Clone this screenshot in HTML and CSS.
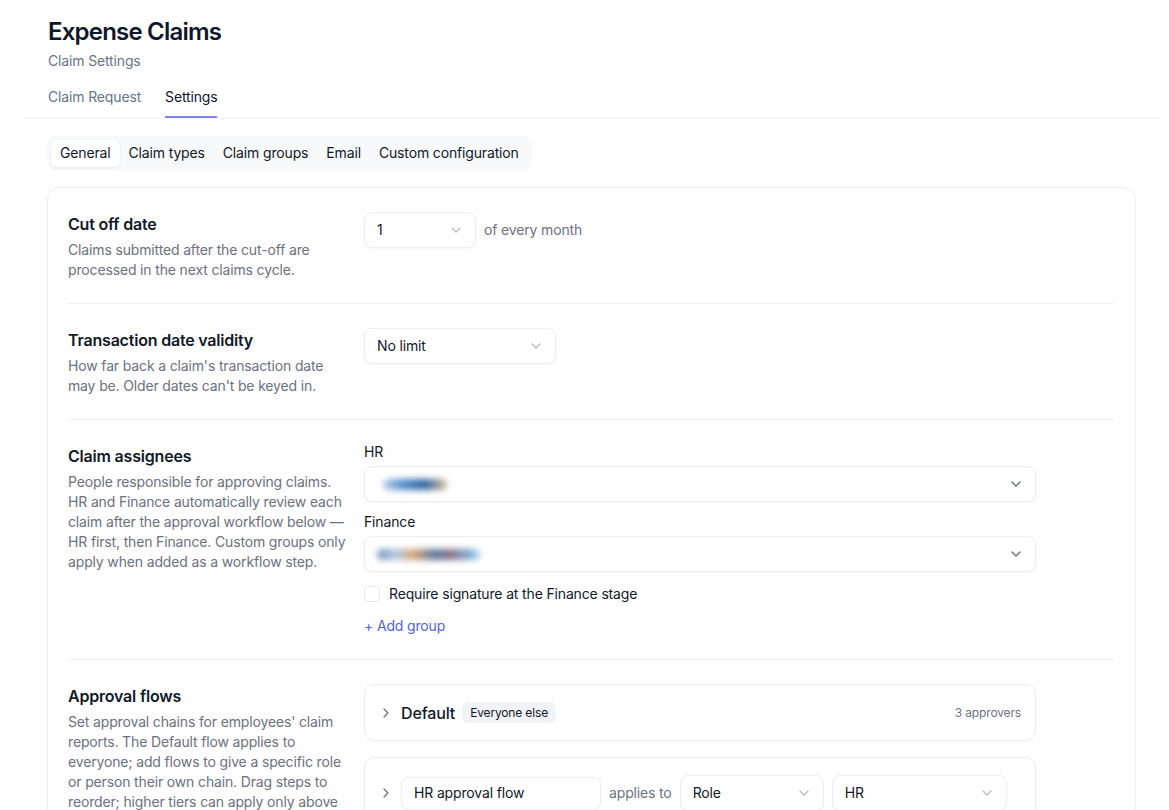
FILE: index.html
```html
<!DOCTYPE html>
<html lang="en">
<head>
    <meta charset="UTF-8">
    <meta name="viewport" content="width=device-width, initial-scale=1.0">
    <title>Expense Claims - Settings</title>
    <link rel="stylesheet" href="styles.css">
</head>
<body>
    <div class="page">
        <header class="page-head">
            <h1>Expense Claims</h1>
            <p class="subtitle">Claim Settings</p>
            <nav class="tabs">
                <a href="#">Claim Request</a>
                <a href="#" class="active">Settings</a>
            </nav>
        </header>

        <main class="content">
            <div class="subtabs">
                <button class="active">General</button>
                <button>Claim types</button>
                <button>Claim groups</button>
                <button>Email</button>
                <button>Custom configuration</button>
            </div>

            <section class="card">
                <div class="row">
                    <div class="row-info">
                        <h2>Cut off date</h2>
                        <p>Claims submitted after the cut-off are processed in the next claims cycle.</p>
                    </div>
                    <div class="row-field inline">
                        <div class="select w-day">
                            <span>1</span>
                            <svg class="chev" viewBox="0 0 10 6"><path d="M1 1l4 4 4-4"/></svg>
                        </div>
                        <span class="muted">of every month</span>
                    </div>
                </div>

                <div class="row">
                    <div class="row-info">
                        <h2>Transaction date validity</h2>
                        <p>How far back a claim's transaction date may be. Older dates can't be keyed in.</p>
                    </div>
                    <div class="row-field">
                        <div class="select w-limit">
                            <span>No limit</span>
                            <svg class="chev" viewBox="0 0 10 6"><path d="M1 1l4 4 4-4"/></svg>
                        </div>
                    </div>
                </div>

                <div class="row">
                    <div class="row-info">
                        <h2>Claim assignees</h2>
                        <p>People responsible for approving claims. HR and Finance automatically review each claim after the approval workflow below — HR first, then Finance. Custom groups only apply when added as a workflow step.</p>
                    </div>
                    <div class="row-field">
                        <label class="field-label">HR</label>
                        <div class="select tall">
                            <span class="blur-name hr"></span>
                            <svg class="chev dark" viewBox="0 0 10 6"><path d="M1 1l4 4 4-4"/></svg>
                        </div>
                        <label class="field-label">Finance</label>
                        <div class="select tall">
                            <span class="blur-name fin"></span>
                            <svg class="chev dark" viewBox="0 0 10 6"><path d="M1 1l4 4 4-4"/></svg>
                        </div>
                        <label class="check">
                            <span class="box"></span>
                            Require signature at the Finance stage
                        </label>
                        <a href="#" class="add-link">+ Add group</a>
                    </div>
                </div>

                <div class="row">
                    <div class="row-info">
                        <h2>Approval flows</h2>
                        <p>Set approval chains for employees' claim reports. The Default flow applies to everyone; add flows to give a specific role or person their own chain. Drag steps to reorder; higher tiers can apply only above a set amount.</p>
                    </div>
                    <div class="row-field">
                        <div class="flow">
                            <svg class="caret" viewBox="0 0 6 10"><path d="M1 1l4 4-4 4"/></svg>
                            <span class="flow-name">Default</span>
                            <span class="pill">Everyone else</span>
                            <span class="flow-count">3 approvers</span>
                        </div>
                        <div class="flow">
                            <svg class="caret" viewBox="0 0 6 10"><path d="M1 1l4 4-4 4"/></svg>
                            <div class="input w-name">HR approval flow</div>
                            <span class="muted">applies to</span>
                            <div class="select small w-role">
                                <span>Role</span>
                                <svg class="chev" viewBox="0 0 10 6"><path d="M1 1l4 4 4-4"/></svg>
                            </div>
                            <div class="select small w-hr">
                                <span>HR</span>
                                <svg class="chev" viewBox="0 0 10 6"><path d="M1 1l4 4 4-4"/></svg>
                            </div>
                        </div>
                    </div>
                </div>
            </section>
        </main>
    </div>
</body>
</html>
```

FILE: styles.css
```css
* {
    box-sizing: border-box;
}
body {
    margin: 0;
    font-family: Inter, "Noto Sans", sans-serif;
    color: #111827;
    background: #fff;
    font-size: 14px;
    line-height: 20px;
    letter-spacing: -0.15px;
}
.page {
    padding: 16px 9px 0 24px;
}
.page-head {
    padding-left: 24px;
    border-bottom: 1px solid #f1f3f6;
}
h1 {
    margin: 0;
    font-size: 24px;
    line-height: 32px;
    font-weight: 600;
    color: #0f172a;
    letter-spacing: -0.8px;
}
.subtitle {
    margin: 3px 0 0;
    color: #64748b;
}
.tabs {
    display: flex;
    gap: 24px;
    margin-top: 16px;
}
.tabs a {
    text-decoration: none;
    color: #64748b;
    padding-bottom: 9px;
    border-bottom: 2px solid transparent;
}
.tabs a.active {
    color: #0f172a;
    border-bottom-color: #7c87e8;
}
.content {
    padding: 17px 24px 0 23px;
}
.subtabs {
    display: inline-flex;
    padding: 4px;
    background: #f8f9fb;
    border-radius: 8px;
}
.subtabs button {
    font: inherit;
    letter-spacing: inherit;
    color: #111827;
    border: 0;
    background: none;
    padding: 3px 9px 4px;
    border-radius: 6px;
}
.subtabs button.active {
    background: #fff;
    box-shadow: 0 1px 3px rgba(15, 23, 42, 0.08);
}
.card {
    margin-top: 16px;
    border: 1px solid #eceef2;
    border-radius: 12px;
    padding: 0 20px;
    background: #fefefe;
}
.row {
    display: flex;
    gap: 16px;
    padding: 24px 0 23px;
    border-bottom: 1px solid #eef0f3;
}
.row:last-child {
    border-bottom: 0;
}
.row-info {
    width: 280px;
    flex-shrink: 0;
}
.row-info h2 {
    margin: 0;
    padding-top: 1px;
    font-size: 16px;
    line-height: 22px;
    font-weight: 600;
    color: #111827;
    letter-spacing: -0.2px;
}
.row-info p {
    margin: 5px 0 0;
    color: #6b7280;
}
.row-field {
    width: 672px;
    display: flex;
    flex-direction: column;
    align-items: flex-start;
}
.row-field.inline {
    flex-direction: row;
    align-items: center;
    gap: 8px;
    align-self: flex-start;
}
.muted {
    color: #6b7280;
}
.select, .input {
    display: flex;
    align-items: center;
    justify-content: space-between;
    height: 36px;
    padding: 0 14px 0 12px;
    border: 1px solid #eceef2;
    border-radius: 8px;
    background: #fff;
    box-shadow: 0 1px 2px rgba(15, 23, 42, 0.04);
}
.w-day { width: 112px; }
.w-limit { width: 192px; }
.select.tall {
    width: 672px;
    height: 36px;
}
.w-role { width: 144px; margin-left: 8px; }
.w-hr { width: 175px; margin-left: 8px; }
.input.w-name {
    width: 200px;
    height: 33px;
    margin-right: 8px;
}
.chev {
    width: 10px;
    height: 6px;
    fill: none;
    stroke: #b4b9c2;
    stroke-width: 1.2;
    stroke-linecap: round;
    stroke-linejoin: round;
}
.chev.dark {
    stroke: #6b7280;
    stroke-width: 1.4;
}
.field-label {
    display: block;
    line-height: 16px;
    margin-bottom: 6px;
}
.select.tall + .field-label {
    margin-top: 12px;
}
.blur-name {
    display: block;
    height: 11px;
    border-radius: 6px;
    filter: blur(3px);
}
.blur-name.hr {
    width: 64px;
    margin-left: 6px;
    background: linear-gradient(90deg, #b8cfea 0%, #5b8fcc 30%, #2f64a3 65%, #d9b895 100%);
}
.blur-name.fin {
    width: 104px;
    background: linear-gradient(90deg, #6d93c0 0%, #b3c9e3 18%, #d9a574 35%, #5a7aa1 55%, #8a6f82 70%, #7fb0dc 90%, #d2e3f3 100%);
}
.check {
    display: flex;
    align-items: center;
    gap: 9px;
    margin-top: 12px;
}
.check .box {
    width: 16px;
    height: 16px;
    border: 1px solid #e5e7eb;
    border-radius: 4px;
    background: #fff;
}
.add-link {
    margin-top: 12px;
    color: #5262db;
    text-decoration: none;
}
.flow {
    width: 672px;
    display: flex;
    align-items: center;
    padding: 17px 14px 17px 16px;
    border: 1px solid #eceef2;
    border-radius: 10px;
    background: #fff;
    margin-bottom: 16px;
}
.caret {
    width: 6px;
    height: 10px;
    margin: 0 12px 0 2px;
    fill: none;
    stroke: #6b7280;
    stroke-width: 1.3;
    stroke-linecap: round;
    stroke-linejoin: round;
}
.flow-name {
    font-size: 16px;
    font-weight: 500;
    margin-right: 7px;
}
.pill {
    font-size: 12px;
    line-height: 21px;
    padding: 0 8px;
    border-radius: 6px;
    background: #f1f3f8;
}
.flow-count {
    margin-left: auto;
    font-size: 12px;
    color: #6b7280;
}
```
